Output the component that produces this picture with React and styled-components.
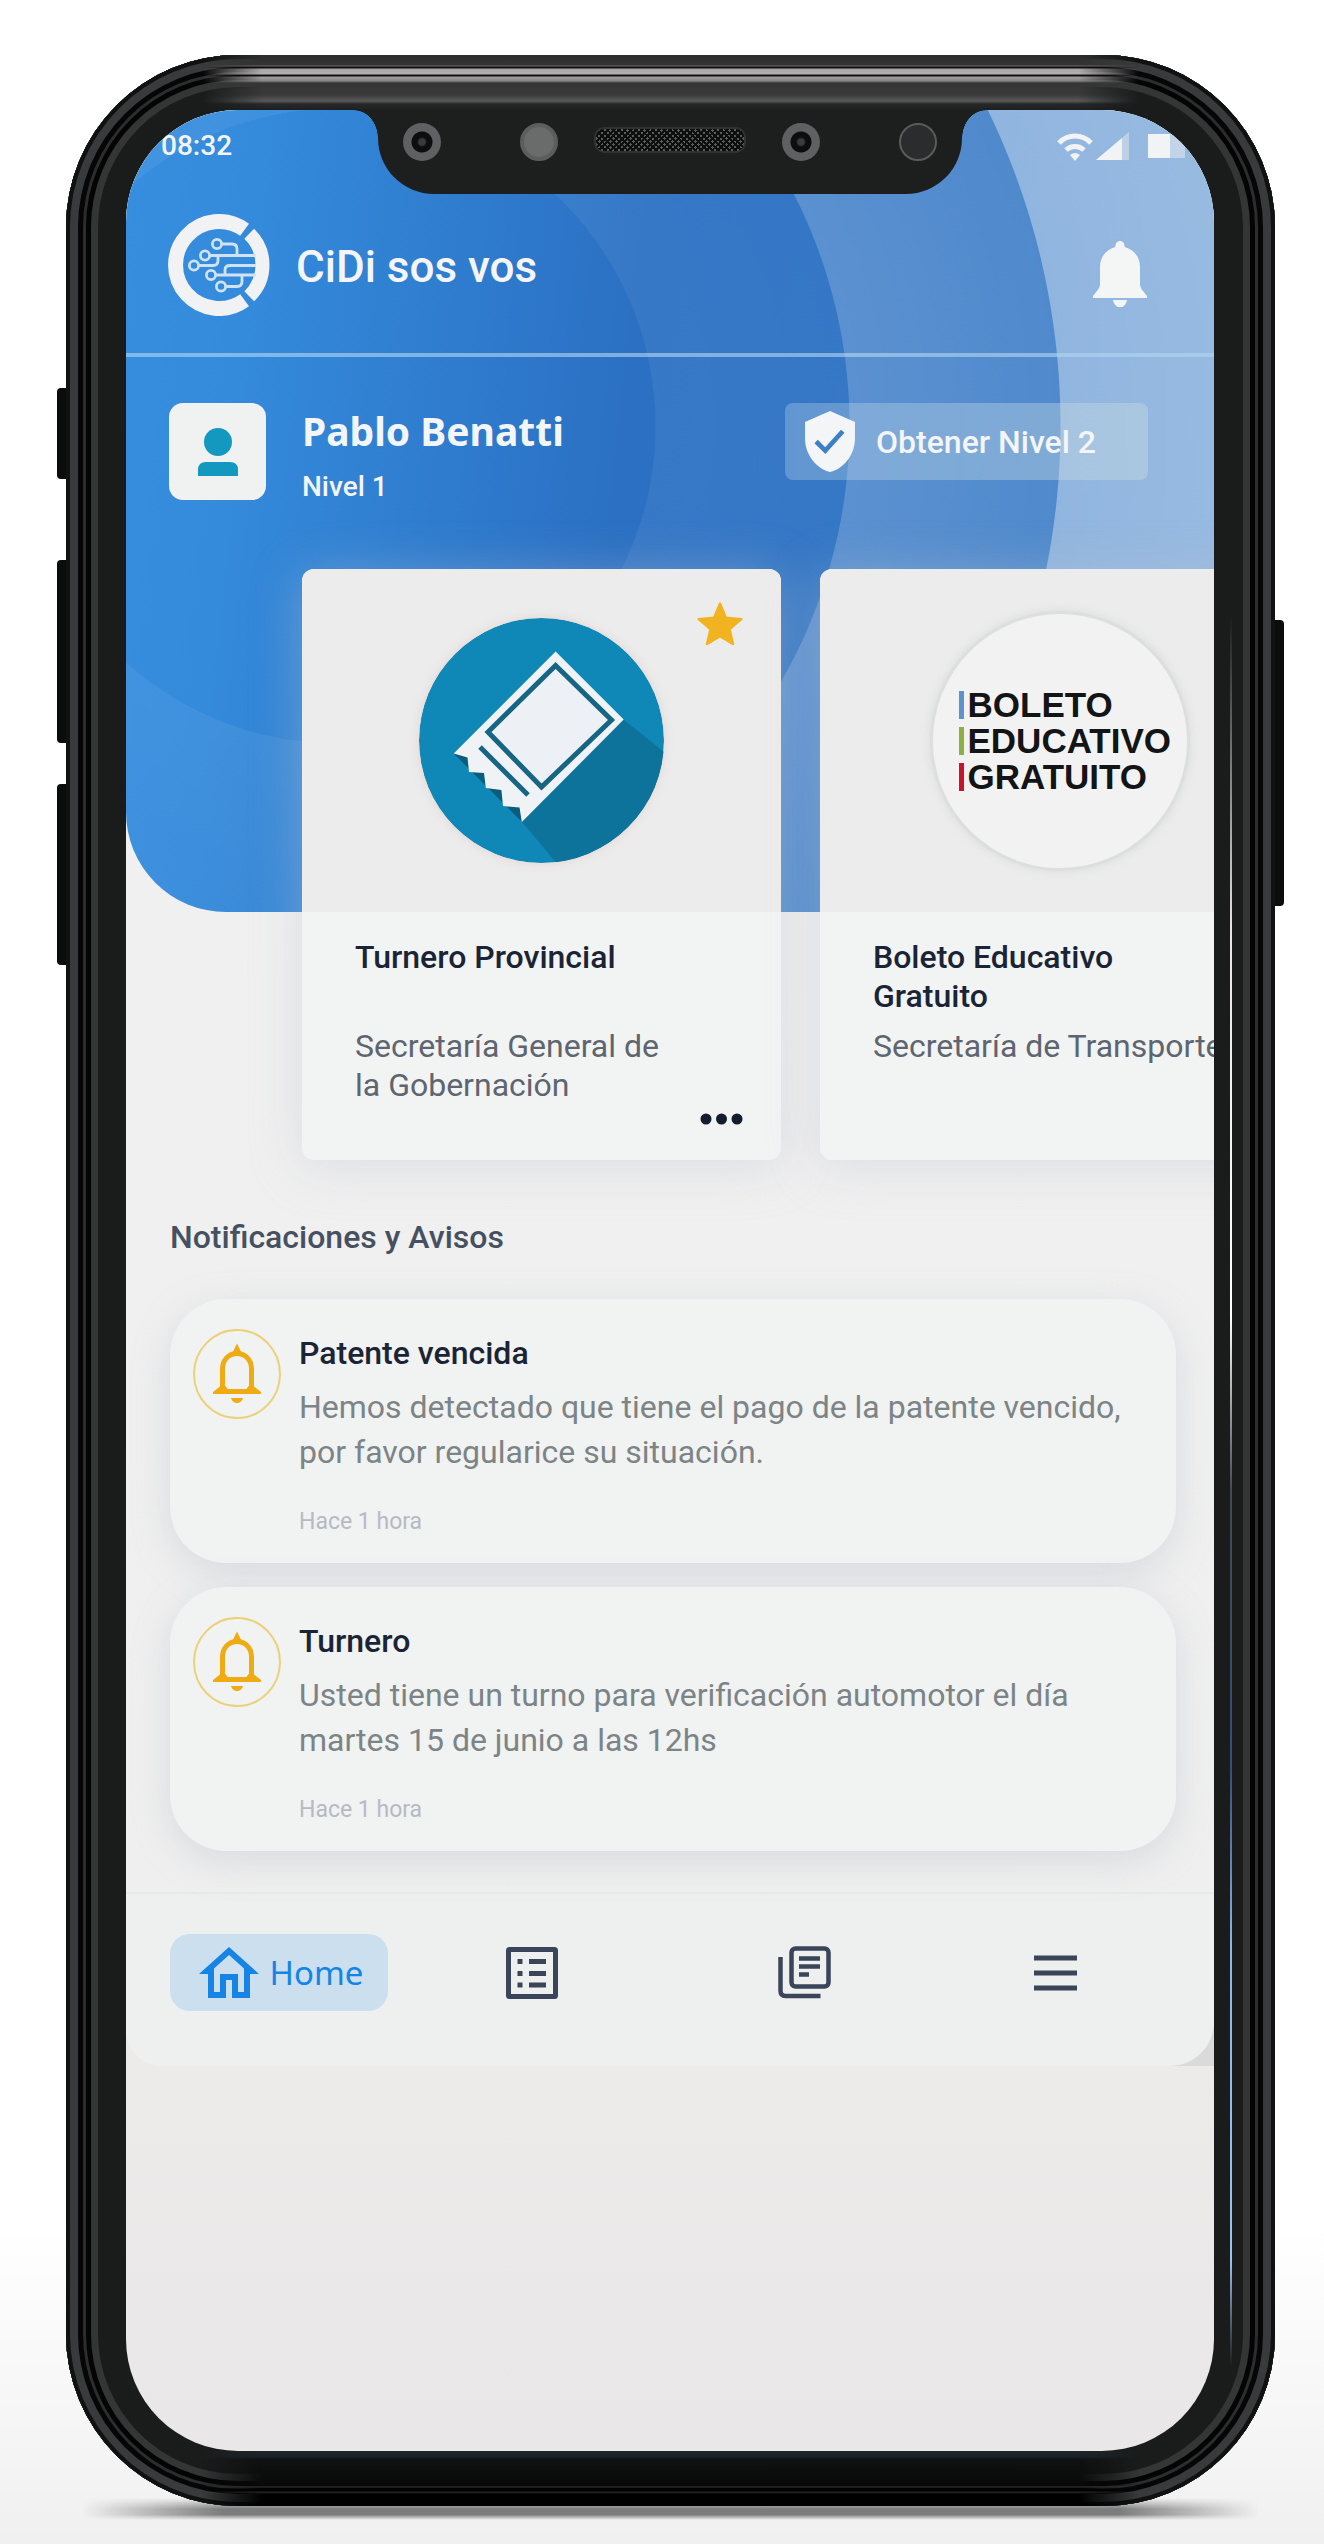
import React from "react";
import styled, { createGlobalStyle } from "styled-components";

const GlobalStyle = createGlobalStyle`
  *, *::before, *::after { box-sizing: border-box; }
  body { margin: 0; background: #fff; font-family: Roboto, "Noto Sans", sans-serif; }
  h1, h2, h3, p, ul { margin: 0; padding: 0; font-size: inherit; font-weight: 400; }
  ul { list-style: none; }
  button { border: 0; padding: 0; background: none; font: inherit; color: inherit; cursor: pointer; }
  a { color: inherit; text-decoration: none; }
  svg { display: block; flex: none; }
`;

/* ---------- Device ---------- */

const Page = styled.div`
  display: flex;
  min-height: 100vh;
  padding: 55px 49px 38px 66px;
  background: linear-gradient(to top, #f0f0f0 0, #fff 320px);
`;

const Phone = styled.div`
  position: relative;
  isolation: isolate;
  flex: 1;
  min-width: 0;
  display: flex;
`;

const GroundShadow = styled.div`
  position: absolute;
  z-index: -1;
  left: 16px;
  right: 16px;
  bottom: -14px;
  height: 22px;
  background: linear-gradient(transparent, #7c7c7c 50%, #7c7c7c 75%, transparent);
  mask-image: linear-gradient(90deg, transparent, #000 140px, #000 calc(100% - 140px), transparent);
`;

const SideKey = styled.div`
  position: absolute;
  z-index: -1;
  top: ${(p) => p.$top}px;
  height: ${(p) => p.$height}px;
  width: 16px;
  ${(p) => p.$side}: -9px;
  border-radius: 4px;
  background: #0b0c0c;
`;

const Frame = styled.div`
  position: relative;
  flex: 1;
  min-width: 0;
  display: flex;
  overflow: hidden;
  padding: 55px 61px 55px 60px;
  border-radius: 172px;
  background: #1a1c1c;
  box-shadow: inset 0 0 0 4px #101111, inset 0 0 0 12px #383a3b,
    inset 0 0 0 17px #060606, inset 0 0 0 20px #2c2d2e,
    inset 0 0 0 25px #040404, inset 0 0 0 32px #343636;
`;

const Bezel = styled.div`
  position: absolute;
  left: 136px;
  right: 136px;
  height: 55px;
  mask-image: linear-gradient(90deg, transparent, #000 60px, #000 calc(100% - 60px), transparent);
`;

const TopBezel = styled(Bezel)`
  top: 0;
  background: linear-gradient(
    #2c2c2c 0, #343434 10px, #6e6c6c 11px, #111 12px, #111 13px,
    #a8a5a6 14px, #b4b1b2 19px, #111 20px, #111 21px,
    #a2a0a1 22px, #858384 26px, #343434 28px, #3a3a3a 40px,
    #595959 46px, #262727 49px, #1e1f1f 55px
  );
`;

const BottomBezel = styled(Bezel)`
  bottom: 0;
  background: linear-gradient(
    #1f272b 0, #1c2225 6px, #0f1212 8px, #080808 35px, #3a3a3a 36px,
    #000 37px, #000 40px, #2a2a2a 41px, #000 43px, #000 55px
  );
`;

const Glint = styled.div`
  position: absolute;
  top: 560px;
  bottom: 140px;
  right: 43px;
  width: 2px;
  background: linear-gradient(
    transparent 0, #e8e4e4 18%, #fff 40%, #444a50 50%, #34507c 66%, #8fb4ea 76%, #9cc0f0 94%, transparent
  );
`;

const Screen = styled.div`
  position: relative;
  flex: 1;
  min-width: 0;
  overflow: hidden;
  border-radius: 112px;
  background: linear-gradient(#edebea 1950px, #e9e7e7);
`;

const Notch = styled.div`
  position: absolute;
  z-index: 2;
  top: 0;
  left: 50%;
  transform: translateX(-50%);
  display: flex;
  justify-content: space-between;
  width: 584px;
  height: 84px;
  padding: 13px 25px 0;
  border-radius: 0 0 56px 56px;
  background: #1d1e1e;

  &::before,
  &::after {
    content: "";
    position: absolute;
    top: 0;
    width: 24px;
    height: 28px;
  }
  &::before {
    right: 100%;
    background: radial-gradient(24px 28px at 0 100%, transparent 98%, #1d1e1e);
  }
  &::after {
    left: 100%;
    background: radial-gradient(24px 28px at 100% 100%, transparent 98%, #1d1e1e);
  }
`;

const SensorPair = styled.div`
  display: flex;
  gap: 79px;
`;

const Sensor = styled.div`
  width: 38px;
  height: 38px;
  border-radius: 50%;
  background: ${(p) => p.$fill};
  border: ${(p) => p.$ring};
`;

const Speaker = styled.div`
  width: 152px;
  height: 26px;
  margin-top: 4px;
  border-radius: 10px;
  border: 2px solid #303131;
  background: repeating-linear-gradient(45deg, transparent 0 2px, #0d0e0e 2px 4px),
    repeating-linear-gradient(-45deg, #5a5b5b 0 2px, #0d0e0e 2px 4px);
`;

/* ---------- Header ---------- */

const AppShell = styled.div`
  background: linear-gradient(#f1f1f1, #efefef);
`;

const Hero = styled.header`
  padding-bottom: 407px;
  border-bottom-left-radius: 100px;
  color: #f4f5f6;
  background: radial-gradient(
      circle at 212px 316px,
      transparent 317px, rgba(255, 255, 255, 0.06) 318px,
      rgba(255, 255, 255, 0.04) 511px, rgba(255, 255, 255, 0.22) 512px,
      rgba(255, 255, 255, 0.16) 722px, rgba(255, 255, 255, 0.47) 723px,
      rgba(255, 255, 255, 0.5) 900px
    ),
    linear-gradient(96deg, #378edf 0, #348adb 140px, #2b70c3 530px, #3076c3);
`;

const StatusBar = styled.div`
  display: flex;
  justify-content: space-between;
  align-items: center;
  padding: 20px 29px 0 35px;
  font-size: 28px;
  font-weight: 500;
  line-height: 32px;
`;

const StatusIcons = styled.div`
  display: flex;
  align-items: center;
`;

const TopBar = styled.div`
  display: flex;
  align-items: center;
  gap: 26px;
  padding: 52px 67px 37px 42px;
  border-bottom: 4px solid rgba(178, 213, 240, 0.62);
`;

const BrandName = styled.h1`
  flex: 1;
  padding-top: 4px;
  font-size: 44px;
  font-weight: 500;
  line-height: 52px;
`;

const Profile = styled.section`
  display: flex;
  align-items: flex-start;
  gap: 36px;
  padding: 46px 66px 0 43px;
`;

const Avatar = styled.div`
  display: grid;
  place-items: center;
  width: 97px;
  height: 97px;
  border-radius: 14px;
  background: #f0f1f1;
`;

const Person = styled.div`
  flex: 1;
  display: grid;
  gap: 10px;
`;

const PersonName = styled.h2`
  font-family: "Noto Sans", "Open Sans", sans-serif;
  font-size: 39px;
  font-weight: 700;
  line-height: 56px;
`;

const PersonLevel = styled.p`
  font-size: 28px;
  font-weight: 500;
  line-height: 36px;
`;

const LevelButton = styled.button`
  display: flex;
  align-items: center;
  gap: 21px;
  width: 363px;
  height: 77px;
  padding: 0 20px;
  border-radius: 8px;
  background: linear-gradient(90deg, rgba(200, 220, 238, 0.3), rgba(200, 220, 225, 0.42));
  font-size: 32px;
  font-weight: 500;
`;

/* ---------- Service cards ---------- */

const Carousel = styled.ul`
  display: flex;
  gap: 39px;
  margin-top: -343px;
  padding-left: 176px;
`;

const ServiceCard = styled.li`
  position: relative;
  flex: 0 0 479px;
  display: flex;
  flex-direction: column;
  border-radius: 12px;
  overflow: hidden;
  background: #f2f3f3;
  box-shadow: 0 6px 50px rgba(190, 195, 210, 0.42);
`;

const CardArt = styled.div`
  display: grid;
  place-items: center;
  height: 343px;
  background: #ececec;
`;

const Favourite = styled.button`
  position: absolute;
  top: 32px;
  right: 38px;
`;

const CardBody = styled.div`
  flex: 1;
  display: flex;
  flex-direction: column;
  padding: 26px 38px 27px 53px;
  font-size: 32px;
  line-height: 39px;
`;

const CardTitle = styled.h3`
  min-height: 78px;
  margin-bottom: 11px;
  font-weight: 500;
  white-space: pre;
  color: #1b2436;
`;

const CardOwner = styled.p`
  white-space: pre;
  color: #5e6570;
`;

const MoreButton = styled.button`
  display: grid;
  align-items: center;
  align-self: flex-end;
  height: 28px;
`;

const TicketBadge = styled.svg`
  border-radius: 50%;
  box-shadow: 0 0 8px rgba(220, 190, 180, 0.5);
`;

const BoletoBadge = styled.div`
  display: flex;
  flex-direction: column;
  justify-content: center;
  width: 260px;
  height: 260px;
  padding-left: 26px;
  border: 3px solid #dddede;
  border-radius: 50%;
  background: #f2f2f2;
  box-shadow: 0 0 10px rgba(190, 195, 195, 0.4);
`;

const BoletoLine = styled.span`
  display: flex;
  align-items: center;
  gap: 4px;
  font-family: "Liberation Sans", Arial, sans-serif;
  font-size: 35px;
  font-weight: 700;
  line-height: 36px;
  color: #131415;

  &::before {
    content: "";
    width: 5px;
    height: 28px;
    background: ${(p) => p.$bar};
  }
`;

/* ---------- Notifications ---------- */

const Notices = styled.section`
  padding: 57px 38px 41px 44px;
`;

const NoticesTitle = styled.h2`
  margin-bottom: 42px;
  font-size: 32px;
  font-weight: 500;
  line-height: 40px;
  color: #465061;
`;

const NoticeList = styled.ul`
  display: grid;
  gap: 24px;
`;

const Notice = styled.li`
  display: flex;
  align-items: flex-start;
  gap: 18px;
  padding: 30px 40px 26px 23px;
  border-radius: 56px;
  background: #f1f2f2;
  box-shadow: 0 10px 36px rgba(170, 178, 192, 0.34);
`;

const NoticeText = styled.div`
  padding-top: 4px;
`;

const NoticeTitle = styled.h3`
  margin-bottom: 12px;
  font-size: 32px;
  font-weight: 500;
  line-height: 40px;
  color: #1b2436;
`;

const NoticeBody = styled.p`
  margin-bottom: 32px;
  font-size: 32px;
  line-height: 45px;
  white-space: pre-line;
  color: #7c8486;
`;

const NoticeTime = styled.time`
  display: block;
  font-size: 23px;
  line-height: 30px;
  color: #b7bac3;
`;

/* ---------- Bottom navigation ---------- */

const NavTray = styled.div`
  background: linear-gradient(90deg, #edebea 50%, #dadada 50%);
`;

const NavBar = styled.nav`
  display: grid;
  grid-template-columns: 248fr 258fr 286fr 216fr;
  place-items: center;
  padding: 40px 51px 55px 29px;
  border-top: 2px solid #e9e9e9;
  border-radius: 0 0 44px 36px;
  background: #eeefef;
`;

const NavLink = styled.a`
  display: flex;
  align-items: center;
  justify-content: center;
  gap: 11px;
  height: 77px;
  color: #3a455a;
`;

const ActiveLink = styled(NavLink)`
  width: 218px;
  padding-left: 4px;
  border-radius: 20px;
  background: #cbdfef;
  color: #1584e4;
  font-family: "Noto Sans", "Open Sans", sans-serif;
  font-size: 33px;
`;

/* ---------- Drawings ---------- */

const WifiIcon = () => (
  <svg width="36" height="30" viewBox="0 0 36 30" fill="none" stroke="#f1f3f5" strokeWidth="5">
    <path d="M2 12a22 22 0 0 1 32 0" />
    <path d="M9 19a13 13 0 0 1 18 0" />
    <path d="M18 30l-5-6a8 8 0 0 1 10 0z" fill="#f1f3f5" stroke="none" />
  </svg>
);

const SignalIcon = () => (
  <svg width="55" height="30" viewBox="0 0 55 30">
    <path d="M3 29L36 1v28z" fill="#bdd0e6" />
    <path d="M3 29L29 7v22z" fill="#f1f3f5" />
  </svg>
);

const BatteryIcon = () => (
  <svg width="37" height="26" viewBox="0 0 37 26">
    <path d="M22 1h15v24H22z" fill="#c3d4e8" />
    <path d="M0 1h22v24H0z" fill="#f1f3f5" />
  </svg>
);

const BrandLogo = () => (
  <svg width="102" height="102" viewBox="0 0 102 102" fill="none" stroke="#f1f2f3">
    <path d="M76.6 15.8A43.5 43.5 0 1 0 76.6 86.2" strokeWidth="15" />
    <path d="M81.2 19.7A43.5 43.5 0 0 1 81.2 82.3" strokeWidth="14" />
    <g strokeWidth="2.8" stroke="#cfe3f5">
      <circle cx="49" cy="30" r="4.6" />
      <circle cx="37" cy="41.5" r="4.6" />
      <circle cx="26" cy="51.5" r="4.6" />
      <circle cx="43" cy="61" r="4.6" />
      <circle cx="53" cy="72.5" r="4.6" />
      <path d="M54 30h10q5 0 5 5v6.500M42 41.500h46M31 51.500h14q5 0 5-5v-5M48 61h40M57 61v-5q0-4.500 5-4.500h26M58 72.500h11q5 0 5-5v-6.500" />
    </g>
  </svg>
);

const HeaderBell = () => (
  <svg width="54" height="84" viewBox="0 0 54 84" fill="#f4f5f5">
    <path d="M27 18c3 0 4.500 2.500 4.800 6C41 26.500 47 34 47 44v17c0 4 3 7 7 12v2H0v-2c4-5 7-8 7-12V44c0-10 6-17.500 15.200-20 .3-3.500 1.800-6 4.800-6z" />
    <path d="M20 77h14c-1 5-4 7.500-7 7.500S21 82 20 77z" />
  </svg>
);

const PersonIcon = () => (
  <svg width="40" height="60" viewBox="0 0 40 60" fill="#1399bf">
    <circle cx="20" cy="20" r="14" />
    <path d="M0 54V48q0-8 8-8h24q8 0 8 8v6z" />
  </svg>
);

const ShieldIcon = () => (
  <svg width="50" height="61" viewBox="3 1 18 22">
    <path fill="#f4f5f6" d="M12 1L3 5v6c0 5.550 3.840 10.740 9 12 5.160-1.260 9-6.450 9-12V5z" />
    <path fill="none" stroke="#3f7fc4" strokeWidth="1.700" d="M7 12l3.300 3.300L16.600 8.300" />
  </svg>
);

const StarIcon = () => (
  <svg width="46" height="44" viewBox="2 2 20 19">
    <path
      fill="#f2b321"
      stroke="#f2b321"
      strokeLinejoin="round"
      d="M12 3l2.600 6.200 6.700.6-5.100 4.400 1.500 6.500L12 17.300l-5.700 3.400 1.500-6.500-5.100-4.400 6.700-.6z"
    />
  </svg>
);

const TicketIcon = () => (
  <TicketBadge width="245" height="245" viewBox="0 0 245 245">
    <circle cx="122.500" cy="122.500" r="122.500" fill="#1088b7" />
    <path fill="#0e739b" d="M204 101L260 146V260H150L103 204z" />
    <path fill="#0b5d7e" d="M34.700 135.500L103 204L110 190L50 130z" />
    <path
      fill="#eff3f5"
      d="M136.600 33.500L204.700 101.600L102.800 204L100.500 189.500L84 188L82.400 172L66.800 170L65 155L50 154L48.500 139.500L34.700 135.500z"
    />
    <path fill="#edf1f5" stroke="#166583" strokeWidth="5" d="M136.600 47.500L192.500 102L122.500 169L69 114z" />
    <path stroke="#166583" strokeWidth="5" d="M61 129L109 177" />
  </TicketBadge>
);

const DotsIcon = () => (
  <svg width="43" height="12" viewBox="0 0 43 12" fill="#141d2e">
    <circle cx="6" cy="6" r="5.500" />
    <circle cx="21.500" cy="6" r="5.500" />
    <circle cx="37" cy="6" r="5.500" />
  </svg>
);

const NoticeBell = () => (
  <svg width="88" height="90" viewBox="0 0 88 90" fill="none" stroke="#eeab12">
    <ellipse cx="44" cy="45" rx="43" ry="44" stroke="#ecd078" strokeWidth="2" />
    <path strokeWidth="5" d="M29.500 62V40c0-9 6-15.500 14.500-15.500S58.500 31 58.500 40v22" />
    <path fill="#eeab12" stroke="none" d="M20 65v-2l7.500-6h5l2 3h19l2-3h5l7.500 6v2zM38.500 26L44 14.500L49.500 26zM38 69h12q-1.500 5-6 5t-6-5z" />
  </svg>
);

const HomeIcon = () => (
  <svg width="60" height="51" viewBox="2 3 20 17" fill="currentColor">
    <path d="M12 5.690l5 4.500V18h-2v-6H9v6H7v-7.810l5-4.500M12 3L2 12h3v8h6v-6h2v6h6v-8h3L12 3z" />
  </svg>
);

const ListIcon = () => (
  <svg width="52" height="52" viewBox="0 0 52 52" fill="none" stroke="currentColor" strokeWidth="5">
    <rect x="2.500" y="2.500" width="47" height="47" rx="1" />
    <path d="M11.500 14.500h5M23 14.500h17M11.500 26.500h5M23 26.500h17M11.500 38h5M23 38h17" />
  </svg>
);

const LibraryIcon = () => (
  <svg width="53" height="53" viewBox="0 0 53 53" fill="none" stroke="currentColor" strokeWidth="4.500">
    <rect x="13.500" y="2.500" width="37" height="38" rx="4" />
    <path d="M2.500 11v34q0 5 5 5h35M21 12.500h21M21 20.500h21M21 28.500h10" />
  </svg>
);

const MenuIcon = () => (
  <svg width="43" height="36" viewBox="0 0 43 36" stroke="currentColor" strokeWidth="5">
    <path d="M0 3h43M0 18h43M0 33h43" />
  </svg>
);

/* ---------- Content ---------- */

const notices = [
  {
    title: "Patente vencida",
    body: "Hemos detectado que tiene el pago de la patente vencido,\npor favor regularice su situación.",
    time: "Hace 1 hora",
  },
  {
    title: "Turnero",
    body: "Usted tiene un turno para verificación automotor el día\nmartes 15 de junio a las 12hs",
    time: "Hace 1 hora",
  },
];

const camera = "radial-gradient(circle, #3a3b3c 0 3px, #0c0d0d 5px 10px, #5f6061 11px)";

export default function App() {
  return (
    <Page>
      <GlobalStyle />
      <Phone>
        <GroundShadow />
        <SideKey $side="left" $top={333} $height={91} />
        <SideKey $side="left" $top={505} $height={183} />
        <SideKey $side="left" $top={729} $height={181} />
        <SideKey $side="right" $top={565} $height={286} />
        <Frame>
          <TopBezel />
          <BottomBezel />
          <Glint />
          <Screen>
            <Notch>
              <SensorPair>
                <Sensor $fill={camera} $ring="0" />
                <Sensor $fill="#6a6b6b" $ring="4px solid #5c5d5d" />
              </SensorPair>
              <Speaker />
              <SensorPair>
                <Sensor $fill={camera} $ring="0" />
                <Sensor $fill="#2b2c2d" $ring="2px solid #5a5b5b" />
              </SensorPair>
            </Notch>

            <AppShell>
              <Hero>
                <StatusBar>
                  <span>08:32</span>
                  <StatusIcons>
                    <WifiIcon />
                    <SignalIcon />
                    <BatteryIcon />
                  </StatusIcons>
                </StatusBar>
                <TopBar>
                  <BrandLogo />
                  <BrandName>CiDi sos vos</BrandName>
                  <button type="button" aria-label="Notificaciones">
                    <HeaderBell />
                  </button>
                </TopBar>
                <Profile>
                  <Avatar>
                    <PersonIcon />
                  </Avatar>
                  <Person>
                    <PersonName>Pablo Benatti</PersonName>
                    <PersonLevel>Nivel 1</PersonLevel>
                  </Person>
                  <LevelButton type="button">
                    <ShieldIcon />
                    Obtener Nivel 2
                  </LevelButton>
                </Profile>
              </Hero>

              <main>
                <Carousel>
                  <ServiceCard>
                    <CardArt>
                      <TicketIcon />
                    </CardArt>
                    <Favourite type="button" aria-label="Favorito">
                      <StarIcon />
                    </Favourite>
                    <CardBody>
                      <CardTitle>Turnero Provincial</CardTitle>
                      <CardOwner>{"Secretaría General de\nla Gobernación"}</CardOwner>
                      <MoreButton type="button" aria-label="Más opciones">
                        <DotsIcon />
                      </MoreButton>
                    </CardBody>
                  </ServiceCard>
                  <ServiceCard>
                    <CardArt>
                      <BoletoBadge>
                        <BoletoLine $bar="#5b93cf">BOLETO</BoletoLine>
                        <BoletoLine $bar="#8cb043">EDUCATIVO</BoletoLine>
                        <BoletoLine $bar="#c9152b">GRATUITO</BoletoLine>
                      </BoletoBadge>
                    </CardArt>
                    <CardBody>
                      <CardTitle>{"Boleto Educativo\nGratuito"}</CardTitle>
                      <CardOwner>Secretaría de Transporte</CardOwner>
                    </CardBody>
                  </ServiceCard>
                </Carousel>

                <Notices>
                  <NoticesTitle>Notificaciones y Avisos</NoticesTitle>
                  <NoticeList>
                    {notices.map((n) => (
                      <Notice key={n.title}>
                        <NoticeBell />
                        <NoticeText>
                          <NoticeTitle>{n.title}</NoticeTitle>
                          <NoticeBody>{n.body}</NoticeBody>
                          <NoticeTime>{n.time}</NoticeTime>
                        </NoticeText>
                      </Notice>
                    ))}
                  </NoticeList>
                </Notices>
              </main>

              <NavTray>
                <NavBar>
                  <ActiveLink href="#home" aria-current="page">
                    <HomeIcon />
                    Home
                  </ActiveLink>
                  <NavLink href="#tramites" aria-label="Trámites">
                    <ListIcon />
                  </NavLink>
                  <NavLink href="#documentos" aria-label="Documentos">
                    <LibraryIcon />
                  </NavLink>
                  <NavLink href="#menu" aria-label="Menú">
                    <MenuIcon />
                  </NavLink>
                </NavBar>
              </NavTray>
            </AppShell>
          </Screen>
        </Frame>
      </Phone>
    </Page>
  );
}
